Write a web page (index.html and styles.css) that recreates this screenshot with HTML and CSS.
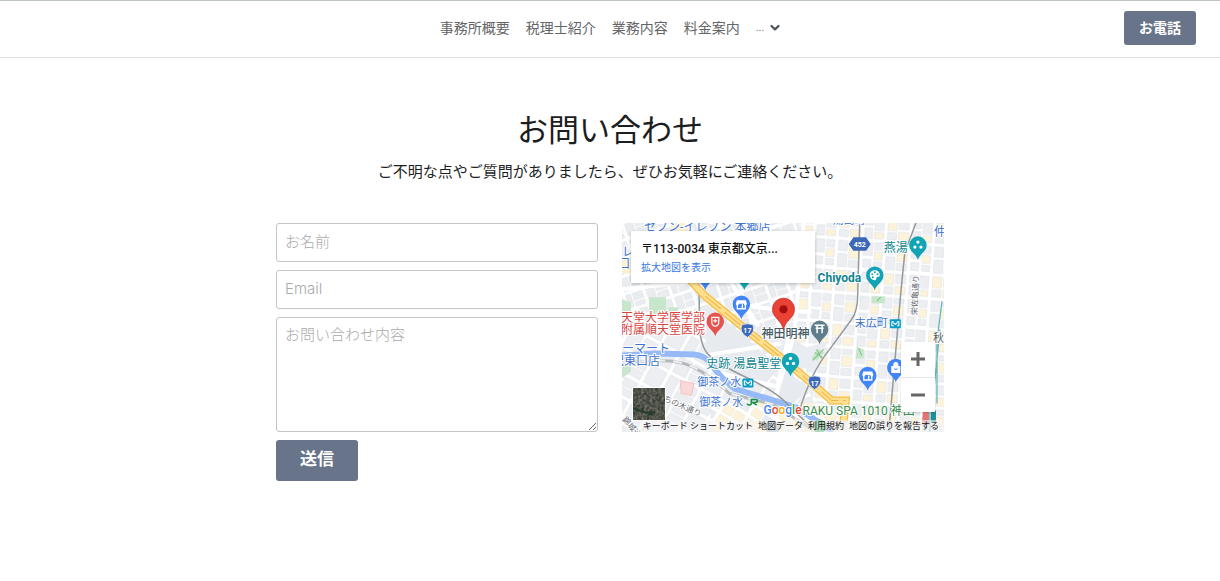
FILE: index.html
```
<!DOCTYPE html>
<html lang="ja">
<head>
<meta charset="utf-8">
<meta name="viewport" content="width=device-width, initial-scale=1">
<title>お問い合わせ</title>
<link rel="stylesheet" href="styles.css">
</head>
<body>
<header class="site-header">
  <nav class="nav" aria-label="メイン">
    <a href="#about">事務所概要</a>
    <a href="#profile">税理士紹介</a>
    <a href="#services">業務内容</a>
    <a href="#fees">料金案内</a>
    <button class="nav-more" type="button" aria-label="その他のメニュー">
      <span class="nav-dots">...</span>
      <svg width="10" height="8" viewBox="0 0 10 8" aria-hidden="true"><path d="M1.5 2 5 5.4 8.500 2" fill="none" stroke="#50555a" stroke-width="2.200" stroke-linecap="round" stroke-linejoin="round"/></svg>
    </button>
  </nav>
  <a class="call-button" href="#tel">お電話</a>
</header>

<main class="contact">
  <h1 class="contact-title">お問い合わせ</h1>
  <p class="contact-lead">ご不明な点やご質問がありましたら、ぜひお気軽にご連絡ください。</p>

  <div class="contact-grid">
    <form class="form">
      <input class="field" type="text" aria-label="お名前" placeholder="お名前">
      <input class="field" type="email" aria-label="Email" placeholder="Email">
      <textarea class="field field-message" aria-label="お問い合わせ内容" placeholder="お問い合わせ内容"></textarea>
      <button class="submit" type="button">送信</button>
    </form>

    <section class="map" aria-label="地図">
      <svg class="map-canvas" viewBox="0 0 321 208" preserveAspectRatio="xMidYMid slice" aria-hidden="true">
        <defs>
          <pattern id="east" width="48" height="54" patternUnits="userSpaceOnUse" patternTransform="rotate(4)">
            <rect width="48" height="54" fill="#fff"/>
            <g fill="#eceef1" stroke="#dde0e5" stroke-width=".6">
              <path d="M2 2h9v13H2zM13 2h8v7h-8zM25 2h9v10h-9zM36 2h10v5H36zM2 19h8v8H2zM13 21h8v6h-8zM25 15h9v13h-9zM36 21h10v7H36zM2 32h8v7H2zM12 32h9v12h-9zM36 32h10v9H36zM2 42h8v10H2zM25 45h9v7h-9z"/>
              <path fill="#fdf3d8" d="M13 11h8v8h-8zM36 9h10v10H36zM25 32h9v11h-9zM12 46h9v6h-9zM36 44h10v8H36z"/>
            </g>
          </pattern>
          <pattern id="north" width="46" height="34" patternUnits="userSpaceOnUse" patternTransform="rotate(-18)">
            <rect width="46" height="34" fill="#fff"/>
            <path d="M2 2h8v12H2zM12 2h11v5H12zM12 9h11v6H12zM27 2h5v13h-5zM34 2h10v7H34zM34 11h10v4H34zM2 19h8v5H2zM2 26h8v6H2zM12 19h11v13H12zM27 19h7v13h-7zM36 19h8v6h-8zM36 27h8v5h-8z" fill="#eaedf0" stroke="#dde0e5" stroke-width=".6"/>
          </pattern>
          <pattern id="south" width="56" height="44" patternUnits="userSpaceOnUse" patternTransform="rotate(28)">
            <rect width="56" height="44" fill="#fff"/>
            <path d="M2 2h14v17H2zM19 2h14v8H19zM19 12h14v7H19zM37 2h17v17H37zM2 23h10v19H2zM15 23h18v9H15zM15 34h18v8H15zM37 23h17v19H37z" fill="#eceef1" stroke="#dfe2e6" stroke-width=".6"/>
          </pattern>
          <pattern id="warm" width="26" height="24" patternUnits="userSpaceOnUse" patternTransform="rotate(32)">
            <rect width="26" height="24" fill="#fff"/>
            <path d="M2 2h10v8H2zM14 2h10v8H14zM2 14h10v8H2z" fill="#fdf3d8" stroke="#e9e3d0" stroke-width=".6"/>
            <path d="M14 14h10v8H14z" fill="#e8ebef"/>
          </pattern>
          <path id="pin" d="M0 15C-1.200 9-8.700 7-8.700 0A8.700 8.700 0 0 1 8.700 0C8.700 7 1.200 9 0 15Z"/>
          <g id="dots" fill="#fff"><circle cy="-3" r="1.600"/><circle cx="-3" cy="2" r="1.600"/><circle cx="3" cy="2" r="1.600"/></g>
          <g id="shop"><path d="M-4.500-4h9l1 3.500a1.500 1.500 0 0 1-3 0H-2.500a1.500 1.500 0 0 1-3 0z" fill="#fff"/><path d="M-4 0v4.500h8V0M1 0v4" fill="none" stroke="#fff" stroke-width="1.300"/></g>
          <g id="shield"><path d="M-5.500-5.500Q0-7.500 5.500-5.500 8.500 2 0 7-8.500 2-5.500-5.500Z" fill="#3c68b8" stroke="#e8eefb" stroke-width=".7"/><text class="route" y="3" text-anchor="middle">17</text></g>
          <g id="metro"><rect width="11" height="9" rx="1" fill="#039bc6"/><path d="M4 2.500H2v4h2M7 2.500h2v4H7M3.500 3.500l2 1.500 2-1.500" fill="none" stroke="#fff" stroke-width="1.100"/></g>
        </defs>

        <rect width="321" height="208" fill="url(#north)"/>
        <path d="M176 0H321V208H205L170 132Z" fill="url(#east)"/>
        <path d="M0 110 86 106 170 155 205 208H0Z" fill="url(#south)"/>
        <path d="M88 178 205 180 225 208H88Z" fill="url(#warm)"/>
        <path d="M50 0h18l-4 8H47zM0 39l12-4v15H0z" fill="#fdf0cc"/>
        <path d="M86 83 122 113 157 144 139 165 94 143 83 124Z" fill="#e7eaee"/>
        <path d="M127 101 154 104 184 124 205 118 191 151 156 126Z" fill="#e9ecf0"/>
        <path d="M163 146 187 166 170 180 152 172Z" fill="#e7eaee"/>
        <path d="M83 132 159 120M94 149 155 163 168 105M157 160 149 187M0 93 72 87M119 82l32 4 38 3M181 0l-9 110-19 64M64 0l45 60 27 43M0 66l76-8" stroke="#fff" stroke-width="4" fill="none"/>
        <g fill="#c8e6cb">
          <path d="M27 74h17v17H27zM46 84h10v5H46zM0 76l9 3v11H0zM0 144l9-5v9l-9 7zM249 73h13v7h-13zM234 123l7 3v9h-8zM195 125l7 4-8 8-5-2z"/>
          <path d="m201 126-11 11m2-8 8 5m-6-8 5 9M254 78l4-4M236 125l3 7" stroke="#80bf89" fill="none"/>
        </g>
        <path d="M58 157l14 3-3 12-10-2z" fill="#fad7d8" stroke="#efb6b8" stroke-width=".7"/>

        <path d="M0 132 34 130 72 131Q84 132 90 142T112 165L138 173 174 184 210 208" fill="none" stroke="#96b9f8" stroke-width="6"/>
        <path d="M0 139 39 137Q62 137 79 148T107 170L151 181 193 208" fill="none" stroke="#b4b8bc" stroke-width="3"/>
        <path d="M0 139 39 137Q62 137 79 148T107 170L151 181 193 208" fill="none" stroke="#eceef0" stroke-width="2" stroke-dasharray="9 8"/>
        <g fill="none" stroke="#96999c" stroke-width="1.500">
          <path d="M71 60Q77 66 77 76V100Q78 123 86 131 96 141 126 155T168 184L190 205"/>
          <path d="M237 0 235 70Q235 88 229 96L207 126Q188 149 176 190"/>
          <path d="M293 0 282 29Q278 66 275 103L266 208"/>
        </g>
        <path d="M319 78 314 117V180M307 187v21M317 106l-8 80" stroke="#69b7b9" stroke-width="1.300" fill="none"/>

        <g fill="none">
          <path d="M67 56 83 73 127 109 162 137 193 163 209 177H223L221 198" stroke="#f7bd4b" stroke-width="8"/>
          <path d="M67 56 83 73 127 109 162 137 193 163 209 177H223L221 198" stroke="#fde08e" stroke-width="5.500"/>
          <path d="M83 73 127 109 162 137 193 163 209 177H223" stroke="#f3b23e" stroke-width="1" stroke-dasharray="20 5"/>
        </g>

        <g fill="#4285f4"><use href="#pin" x="83" y="52"/><use href="#pin" x="119" y="81"/><use href="#pin" x="245" y="152"/><use href="#pin" x="273" y="144"/></g>
        <g fill="#12a4b5"><use href="#pin" x="122" y="52"/><use href="#pin" x="295" y="22"/><use href="#pin" x="252" y="52"/><use href="#pin" x="168" y="138"/></g>
        <use href="#dots" x="295" y="22"/><use href="#dots" x="168" y="138"/>
        <use href="#shop" x="119" y="81"/><use href="#shop" x="245" y="152"/>
        <path d="M269 143h8v6h-8zM271 143v-2a2 2 0 0 1 4 0v2" fill="#fff" stroke="#fff"/><path d="M271.500 145a1.600 1.600 0 0 0 3 0" fill="none" stroke="#4285f4"/>
        <path d="M252 47a5 5 0 1 0 0 10c2 0 1-2 2-3s3 0 3-2a5 5 0 0 0-5-5Z" fill="#fff"/><g fill="#12a4b5"><circle cx="249.500" cy="51" r="1"/><circle cx="252" cy="49" r="1"/><circle cx="254.700" cy="51" r="1"/><circle cx="250" cy="54" r="1"/></g>
        <use href="#pin" x="93" y="98" fill="#e8524c"/>
        <path d="M89.500 94h7v5q0 3-3.500 4-3.500-1-3.500-4zM93 95.500v4M91 97.500h4" fill="none" stroke="#fff" stroke-width="1.200"/>
        <use href="#pin" x="197" y="106" fill="#607d8b"/>
        <path d="M192 102h10M193 105h8M194.500 102v8M199.500 102v8" stroke="#fff" stroke-width="1.500"/>
        <use href="#shield" x="125" y="107"/><use href="#shield" x="192" y="159"/>
        <path d="m231 15h12l4 6-4 6h-12l-4-6z" fill="#3c68b8" stroke="#3c68b8" stroke-width="1.500" stroke-linejoin="round"/><text class="route" x="237" y="24" text-anchor="middle">452</text>
        <use href="#metro" x="267" y="96"/><use href="#metro" x="120" y="155"/><path d="M233 0h9v1h-9z" fill="#039bc6"/>

        <g class="label blue">
          <text x="22" y="8">セブン-イレブン 本郷店</text><text x="0" y="33">レ</text><text x="-4" y="45">口</text>
          <text x="0" y="130">ーマート</text><text x="-10" y="142">沢東口店</text>
          <text class="station" x="75" y="163">御茶ノ水</text><text class="station" x="77" y="182">御茶ノ水</text>
          <text class="station" x="232" y="104">末広町</text><text x="311" y="13">仲</text><text class="station" x="210" y="1">湯島町</text>
        </g>
        <g class="label red"><text x="-1" y="99">天堂大学医学部</text><text x="-1" y="111">附属順天堂医院</text></g>
        <g class="label teal"><text x="84" y="145">史跡 湯島聖堂</text><text x="261" y="29">燕湯</text><text class="place" x="195" y="59">Chiyoda</text></g>
        <text class="label shrine" x="139" y="115">神田明神</text>
        <text class="label green" x="180" y="191">RAKU SPA 1010 神田</text>
        <path d="M125 180q0 1.500 2 1.500t2-2V176h4q2 0 2 1.500t-2 1.500h-3l4.500 2.500" fill="none" stroke="#16924a" stroke-width="1.500"/>
        <g class="label street"><text transform="translate(294 92) rotate(-87)">栄佐亀通り</text><text transform="translate(41 177) rotate(24)">ちの木通り</text><text transform="translate(0 196) rotate(50)">錦城通り</text></g>
        <text class="label street-large" x="310" y="119">秋</text>
        <path d="M300 187h6v14h-7z" fill="#e27575"/><path d="M308 187h5v12h-5z" fill="#218e98"/>
        <circle cx="150" cy="204" r="7" fill="#a9b5c1"/><circle cx="197" cy="203" r="7" fill="#4caf64"/>

        <path d="M161 107C160 97 150 95 150 86A11 11 0 0 1 172 86C172 95 162 97 161 107Z" fill="#ea4335" stroke="#c5221f" stroke-width=".7"/><circle cx="161" cy="86" r="4" fill="#a50e0e"/>
        <text class="label logo" x="141" y="190"><tspan fill="#4285f4">G</tspan><tspan fill="#ea4335">o</tspan><tspan fill="#f9ab00">o</tspan><tspan fill="#4285f4">g</tspan><tspan fill="#34a853">l</tspan><tspan fill="#ea4335">e</tspan></text>
      </svg>

      <div class="place-card">
        <strong class="place-address">〒113-0034 東京都文京...</strong>
        <a class="place-link" href="#map">拡大地図を表示</a>
      </div>

      <button class="satellite" type="button" aria-label="航空写真を表示">
        <svg viewBox="0 0 32 32" aria-hidden="true">
          <defs><filter id="terrain" color-interpolation-filters="sRGB"><feTurbulence type="fractalNoise" baseFrequency=".35" numOctaves="3" seed="4"/><feColorMatrix values=".4 .2 0 0 .02 .4 .2 0 0 .03 .35 .2 0 0 .02 0 0 0 0 1"/></filter></defs>
          <rect width="32" height="32" fill="#515450"/><rect width="32" height="32" filter="url(#terrain)"/>
          <path d="M0 19q5 1 8 3t9 1l4 1-2 4-6-3-7-1-6-3z" fill="#1d3a22" opacity=".8"/>
        </svg>
      </button>

      <div class="zoom-controls">
        <button type="button" aria-label="拡大"><svg width="16" height="16" viewBox="0 0 16 16"><path d="M8 1v14M1 8h14" stroke="#666" stroke-width="3"/></svg></button>
        <button type="button" aria-label="縮小"><svg width="16" height="16" viewBox="0 0 16 16"><path d="M1 8h14" stroke="#666" stroke-width="3"/></svg></button>
      </div>

      <div class="map-footer">
        <button type="button">キーボード ショートカット</button>
        <button type="button">地図データ</button>
        <a href="#terms">利用規約</a>
        <a href="#report">地図の誤りを報告する</a>
      </div>
    </section>
  </div>
</main>
</body>
</html>
```
FILE: styles.css
```
*,
*::before,
*::after {
  box-sizing: border-box;
}

body {
  margin: 0;
  background: #fff;
  color: #1c1d1e;
  font-family: "Liberation Sans", "Noto Sans CJK JP", sans-serif;
  font-size: 15px;
}

button,
input,
textarea {
  font: inherit;
}

.site-header {
  display: grid;
  grid-template-columns: 1fr auto 1fr;
  align-items: center;
  min-height: 58px;
  padding: 0 24px 2px;
  border-top: 1px solid #bcc5c1;
  border-bottom: 1px solid #dfe1e1;
}

.nav {
  grid-column: 2;
  display: flex;
  align-items: center;
  gap: 16px;
  font-size: 14px;
  line-height: 20px;
}

.nav a,
.nav-more {
  color: #636567;
  text-decoration: none;
}

.nav-more {
  display: flex;
  align-items: center;
  gap: 6px;
  padding: 0;
  border: 0;
  background: none;
}

.nav-dots {
  font-size: 10px;
}

.call-button {
  justify-self: end;
  padding: 7px 15px;
  border-radius: 3px;
  background: #677489;
  color: #fff;
  font-size: 14px;
  font-weight: 700;
  line-height: 20px;
  text-decoration: none;
}

.contact {
  max-width: 700px;
  margin: 0 auto;
  padding: 50px 16px;
}

.contact-title {
  margin: 0;
  font-size: 31px;
  font-weight: 400;
  line-height: 46px;
  text-align: center;
}

.contact-lead {
  margin: 6px 0 40px;
  line-height: 23px;
  text-align: center;
}

.contact-grid {
  display: grid;
  grid-template-columns: repeat(auto-fit, minmax(280px, 1fr));
  gap: 24px;
  align-items: start;
}

.form {
  display: flex;
  flex-direction: column;
  align-items: flex-start;
  gap: 8px;
}

.field {
  width: 100%;
  min-height: 39px;
  padding: 6px 8px 8px;
  border: 1px solid #c4c5c5;
  border-radius: 3px;
  background: #fff;
  color: #1c1d1e;
  font-family: Inter, "Noto Sans CJK JP", sans-serif;
  font-weight: 300;
  line-height: 22px;
}

.field::placeholder {
  color: #a9aaaa;
  opacity: 1;
}

.field-message {
  height: 115px;
  resize: vertical;
}

.submit {
  padding: 7px 24px 9px;
  border: 0;
  border-radius: 3px;
  background: #677489;
  color: #fff;
  font-size: 17px;
  font-weight: 700;
  line-height: 25px;
}

.map {
  position: relative;
  aspect-ratio: 321 / 208;
  overflow: hidden;
  background: #eceef1;
  font-family: Roboto, "Noto Sans CJK JP", sans-serif;
}

.map-canvas {
  display: block;
  width: 100%;
  height: 100%;
}

.label {
  font-size: 12px;
  paint-order: stroke;
  stroke: #fff;
  stroke-width: 2px;
  stroke-linejoin: round;
}

.blue { fill: #3e73cf; }
.red { fill: #d64541; }
.teal { fill: #10858f; }
.green { fill: #388e4d; }
.shrine { fill: #455a64; font-weight: 500; }
.station { font-size: 11px; }
.place { font-size: 12px; font-weight: 700; }
.street { fill: #666b70; font-size: 8px; }
.street-large { fill: #55595d; font-size: 11px; }
.route { fill: #fff; font-size: 7px; font-weight: 700; }
.logo { font-size: 12px; font-weight: 500; }

.place-card {
  position: absolute;
  top: 8px;
  left: 9px;
  display: flex;
  flex-direction: column;
  gap: 2px;
  width: 184px;
  padding: 9px 10px 8px;
  background: #fff;
  box-shadow: 0 1px 3px rgba(0, 0, 0, .25);
}

.place-address {
  overflow: hidden;
  color: #111;
  font-size: 12px;
  font-weight: 500;
  line-height: 18px;
  white-space: nowrap;
}

.place-link {
  color: #3576df;
  font-size: 10px;
  line-height: 15px;
  text-decoration: none;
}

.satellite {
  position: absolute;
  bottom: 11px;
  left: 10px;
  width: 34px;
  height: 34px;
  padding: 0;
  border: 1px solid #fff;
  background: #515450;
}

.satellite svg {
  display: block;
  width: 100%;
}

.zoom-controls {
  position: absolute;
  right: 9px;
  bottom: 20px;
  display: flex;
  flex-direction: column;
  width: 34px;
  background: #fff;
  box-shadow: 0 1px 2px rgba(0, 0, 0, .15);
}

.zoom-controls button {
  display: grid;
  place-items: center;
  height: 35px;
  padding: 0;
  border: 0;
  background: none;
}

.zoom-controls button + button {
  border-top: 1px solid #e6e6e6;
}

.map-footer {
  position: absolute;
  right: 0;
  bottom: 0;
  display: flex;
  gap: 5px;
  padding: 0 5px;
  background: rgba(245, 245, 245, .6);
  font-size: 9px;
  line-height: 12px;
  white-space: nowrap;
}

.map-footer a,
.map-footer button {
  padding: 0;
  border: 0;
  background: none;
  color: #111;
  text-decoration: none;
}
```
